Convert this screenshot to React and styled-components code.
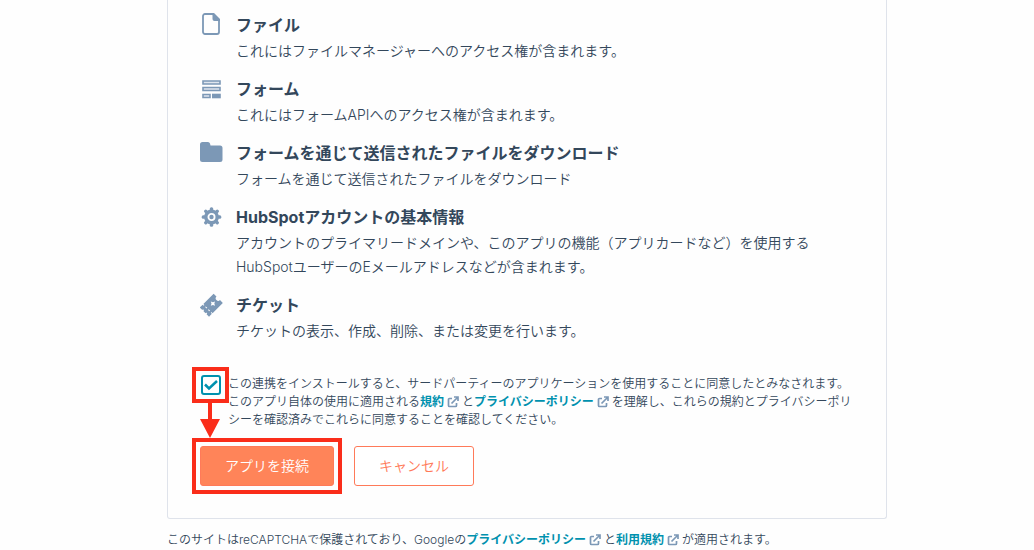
import { useState } from "react";
import styled, { createGlobalStyle } from "styled-components";

const scopes = [
    {
        icon: "file",
        title: "ファイル",
        text: "これにはファイルマネージャーへのアクセス権が含まれます。",
    },
    {
        icon: "form",
        title: "フォーム",
        text: "これにはフォームAPIへのアクセス権が含まれます。",
    },
    {
        icon: "folder",
        title: "フォームを通じて送信されたファイルをダウンロード",
        text: "フォームを通じて送信されたファイルをダウンロード",
    },
    {
        icon: "gear",
        title: "HubSpotアカウントの基本情報",
        text: "アカウントのプライマリードメインや、このアプリの機能（アプリカードなど）を使用するHubSpotユーザーのEメールアドレスなどが含まれます。",
    },
    {
        icon: "ticket",
        title: "チケット",
        text: "チケットの表示、作成、削除、または変更を行います。",
    },
];

const teeth = [0, 45, 90, 135, 180, 225, 270, 315];

const shapes = {
    file: (
        <>
            <path
                d="M5 1h8l6 6v12a2 2 0 0 1-2 2H5a2 2 0 0 1-2-2V3a2 2 0 0 1 2-2z"
                fill="none"
                stroke="currentColor"
                strokeWidth="1.800"
            />
            <path d="M12.500 0h1.500l6 6v2h-5.500a2 2 0 0 1-2-2z" />
        </>
    ),
    form: (
        <>
            <path
                d="M3 4h17v3H3zM3 10.500h17v3H3zM3 17.500h7v3H3z"
                fill="#dfe5ee"
                stroke="currentColor"
                strokeWidth="1.600"
            />
            <path d="M12 16.700h8.800v4.600H12z" />
        </>
    ),
    folder: (
        <path d="M2.500 1h5.500q1.500 0 2 1.500l.5 2h9.500a2.500 2.500 0 0 1 2.500 2.500v11.500a2.500 2.500 0 0 1-2.500 2.500H2.500A2.500 2.500 0 0 1 0 18.500V3.500A2.500 2.500 0 0 1 2.500 1z" />
    ),
    gear: (
        <>
            {teeth.map((angle) => (
                <rect
                    key={angle}
                    x="9.800"
                    y="2.200"
                    width="3.400"
                    height="5"
                    rx="1.500"
                    transform={`rotate(${angle} 11.5 12)`}
                />
            ))}
            <circle
                cx="11.500"
                cy="12"
                r="5.700"
                fill="none"
                stroke="currentColor"
                strokeWidth="3.400"
            />
            <circle cx="11.500" cy="12" r="2.200" />
        </>
    ),
    ticket: (
        <g transform="rotate(-45 11.500 12)">
            <path
                fillRule="evenodd"
                d="M1.500 5.500h4v1.500h1V5.500H21v4a2.500 2.500 0 0 0 0 5v4H6.500V17h-1v1.500h-4V15h1v-1.500h-1v-3h1V9h-1zM5.500 9v2h1V9zM5.500 13v2h1v-2zM13.500 9l1 2 2 1-2 1-1 2-1-2-2-1 2-1z"
            />
        </g>
    ),
};

const ExternalLink = ({ href, children }) => (
    <>
        <Link href={href}>{children}</Link>
        <LinkIcon viewBox="0 0 12 12" aria-hidden="true">
            <path d="M5 2.500H2.500a1 1 0 0 0-1 1v6a1 1 0 0 0 1 1h6a1 1 0 0 0 1-1V7" />
            <path d="M4.500 7.500l6-6M7 1h4v4" />
        </LinkIcon>
    </>
);

const App = () => {
    const [agreed, setAgreed] = useState(true);

    return (
        <>
            <GlobalStyle />
            <Page>
                <Card>
                    <ScopeList>
                        {scopes.map(({ icon, title, text }) => (
                            <Scope key={title}>
                                <ScopeIcon viewBox="0 0 24 24" aria-hidden="true">
                                    {shapes[icon]}
                                </ScopeIcon>
                                <div>
                                    <ScopeTitle>{title}</ScopeTitle>
                                    <ScopeText>{text}</ScopeText>
                                </div>
                            </Scope>
                        ))}
                    </ScopeList>
                    <Consent>
                        <Marked>
                            <Checkbox
                                id="consent"
                                type="checkbox"
                                checked={agreed}
                                onChange={(e) => setAgreed(e.target.checked)}
                            />
                            <Highlight />
                            <Arrow viewBox="0 0 20 36" aria-hidden="true">
                                <path d="M8 0h4v17h8L10 36 0 17h8z" />
                            </Arrow>
                        </Marked>
                        <ConsentText htmlFor="consent">
                            この連携をインストールすると、サードパーティーのアプリケーションを使用することに同意したとみなされます。このアプリ自体の使用に適用される
                            <ExternalLink href="#terms">規約</ExternalLink>
                            と
                            <ExternalLink href="#privacy">プライバシーポリシー</ExternalLink>
                            を理解し、これらの規約とプライバシーポリシーを確認済みでこれらに同意することを確認してください。
                        </ConsentText>
                    </Consent>
                    <Actions>
                        <Marked>
                            <Button $primary>アプリを接続</Button>
                            <Highlight />
                        </Marked>
                        <Button>キャンセル</Button>
                    </Actions>
                </Card>
                <Footer>
                    このサイトはreCAPTCHAで保護されており、Googleの
                    <ExternalLink href="#google-privacy">プライバシーポリシー</ExternalLink>
                    と
                    <ExternalLink href="#google-terms">利用規約</ExternalLink>
                    が適用されます。
                </Footer>
            </Page>
        </>
    );
};

const GlobalStyle = createGlobalStyle`
    * {
        box-sizing: border-box;
    }

    body {
        margin: 0;
        background: #fefefe;
        color: #33475b;
        font-family: Inter, "Noto Sans CJK JP", sans-serif;
        font-size: 14px;
        font-weight: 350;
        line-height: 24px;
        text-spacing-trim: space-all;
    }
`;

const Page = styled.main`
    max-width: 740px;
    margin: 0 auto;
    padding-left: 20px;
`;

const Card = styled.section`
    padding: 11px 32px 32px;
    border: 1px solid #dfe3eb;
    border-top: none;
    border-radius: 0 0 3px 3px;
`;

const ScopeList = styled.ul`
    display: flex;
    flex-direction: column;
    gap: 12px;
    margin: 0;
    padding: 0;
    list-style: none;
`;

const Scope = styled.li`
    display: flex;
    gap: 12px;
    padding-right: 32px;
`;

const ScopeIcon = styled.svg`
    flex: none;
    width: 24px;
    height: 24px;
    margin-top: 2px;
    color: #7c98b6;
    fill: currentColor;
`;

const ScopeTitle = styled.h2`
    margin: 0;
    font-size: 16px;
    font-weight: 700;
    line-height: 28px;
`;

const ScopeText = styled.p`
    margin: 0;
`;

const Consent = styled.div`
    display: flex;
    align-items: flex-start;
    gap: 7px;
    margin-top: 32px;
`;

const Marked = styled.div`
    position: relative;
    flex: none;
`;

const Checkbox = styled.input`
    display: block;
    appearance: none;
    width: 20px;
    height: 20px;
    margin: 0 0 0 1px;
    border: 2px solid #0091ae;
    border-radius: 3px;
    background: #fff;

    &:checked {
        background: #fff
            url("data:image/svg+xml,%3Csvg xmlns='http://www.w3.org/2000/svg' viewBox='0 0 16 16'%3E%3Cpath d='M2 7.500l4 4L14 4' fill='none' stroke='%230091ae' stroke-width='2.500'/%3E%3C/svg%3E")
            center / 16px no-repeat;
    }
`;

const Highlight = styled.span`
    position: absolute;
    inset: -8px;
    border: 4px solid #fa2d1a;
    pointer-events: none;
`;

const Arrow = styled.svg`
    position: absolute;
    top: 27px;
    left: 0;
    width: 20px;
    height: 36px;
    fill: #fa2d1a;
`;

const ConsentText = styled.label`
    font-size: 12px;
    line-height: 18px;
`;

const Link = styled.a`
    color: #0091ae;
    font-weight: 600;
    text-decoration: none;

    &:hover {
        text-decoration: underline;
    }
`;

const LinkIcon = styled.svg`
    width: 12px;
    height: 12px;
    margin: 0 3px;
    vertical-align: -2px;
    fill: none;
    stroke: #7c98b6;
    stroke-width: 1.7;
`;

const Actions = styled.div`
    display: flex;
    gap: 20px;
    margin-top: 17px;
`;

const Button = styled.button`
    display: block;
    height: 40px;
    padding: 0 24px;
    border: 1px solid #ff7a59;
    border-radius: 3px;
    background: ${({ $primary }) => ($primary ? "#ff8459" : "#fff")};
    color: ${({ $primary }) => ($primary ? "#fff" : "#ff7a59")};
    font: inherit;
    cursor: pointer;
`;

const Footer = styled.footer`
    margin-top: 9px;
    font-size: 12px;
`;

export default App;
